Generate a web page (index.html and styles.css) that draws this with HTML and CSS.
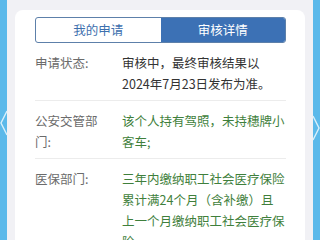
FILE: index.html
```html
<!DOCTYPE html>
<html lang="zh-CN">
<head>
  <meta charset="UTF-8" />
  <meta name="viewport" content="width=device-width, initial-scale=1.0"/>
  <title>审核详情</title>
  <link rel="stylesheet" href="styles.css">
</head>
<body>

  <div class="page">
    <div class="card">
      <div class="tabs">
        <div class="tab">我的申请</div>
        <div class="tab active">审核详情</div>
      </div>

      <div class="row">
        <div class="label">申请状态:</div>
        <div class="value">审核中，最终审核结果以<br>2024年7月23日发布为准。</div>
      </div>

      <div class="row">
        <div class="label">公安交管部<br>门:</div>
        <div class="value ok">该个人持有驾照，未持穗牌小<br>客车;</div>
      </div>

      <div class="row">
        <div class="label">医保部门:</div>
        <div class="value ok">三年内缴纳职工社会医疗保险<br>累计满24个月（含补缴）且<br>上一个月缴纳职工社会医疗保<br>险;</div>
      </div>
    </div>
  </div>

  <svg class="arrow arrow-left" width="8" height="26" viewBox="0 0 8 26">
    <path d="M7 1 L1 13 L7 25" fill="none" stroke="#d9f0fb" stroke-width="1.4"/>
  </svg>
  <svg class="arrow arrow-right" width="8" height="26" viewBox="0 0 8 26">
    <path d="M1 1 L7 13 L1 25" fill="none" stroke="#d9f0fb" stroke-width="1.4"/>
  </svg>

</body>
</html>
```

FILE: styles.css
```css
body {
  margin: 0;
  height: 240px;
  overflow: hidden;
  background: #5bb9ea;
  font-family: "Noto Sans CJK SC", "Noto Sans", sans-serif;
  font-size: 12.5px;
}

.page {
  margin: 0 7px;
  height: 240px;
  background: #f1f1f5;
  padding: 10px 8px 0;
}

.card {
  background: white;
  border-radius: 8px;
  padding: 7px 19px 0 20px;
  height: 260px;
}

.tabs {
  display: flex;
  height: 26px;
  border: 1px solid #5d80aa;
  border-radius: 3px;
  overflow: hidden;
  box-sizing: border-box;
}

.tab {
  flex: 1;
  text-align: center;
  line-height: 24px;
  color: #3d70ae;
}

.tab.active {
  background: #3c71b5;
  color: white;
}

.row {
  display: flex;
  gap: 19px;
  padding: 9px 0 6px;
  line-height: 21px;
  border-bottom: 1px solid #ececec;
  white-space: nowrap;
}

.label {
  width: 68px;
  color: #6b6b6b;
}

.value {
  flex: 1;
  color: #333;
}

.value.ok {
  color: #3f7f3c;
}

.arrow {
  position: absolute;
}

.arrow-left {
  left: 0;
  top: 110px;
}

.arrow-right {
  right: 0;
  top: 115px;
}
```
